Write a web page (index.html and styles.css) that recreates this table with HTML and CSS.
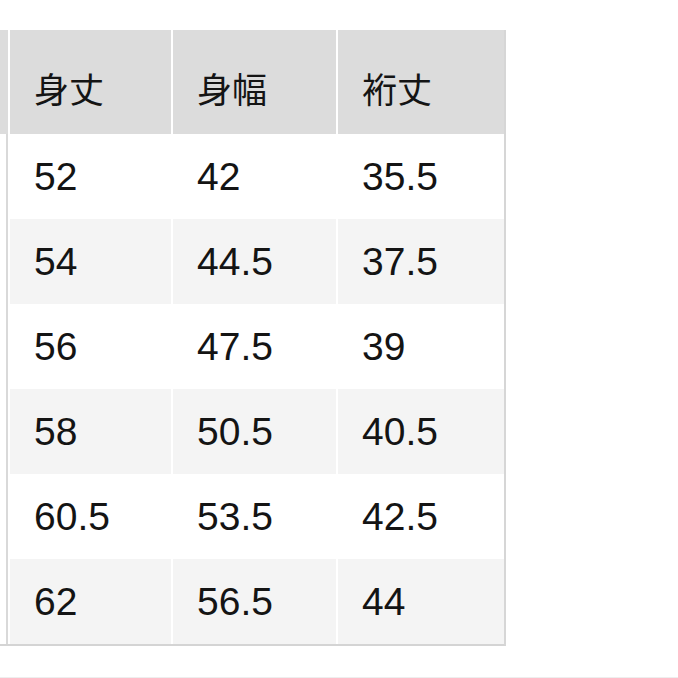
FILE: index.html
```html
<!DOCTYPE html>
<html lang="ja">
<head>
<meta charset="utf-8">
<title>サイズ表</title>
<link rel="stylesheet" href="styles.css">
</head>
<body>
<div class="sheet">
  <div class="grid">
    <div class="cut head"></div>
    <div class="cell head">身丈</div>
    <div class="cell head">身幅</div>
    <div class="cell head">裄丈</div>

    <div class="cut"></div>
    <div class="cell">52</div>
    <div class="cell">42</div>
    <div class="cell">35.5</div>

    <div class="cut"></div>
    <div class="cell alt">54</div>
    <div class="cell alt">44.5</div>
    <div class="cell alt">37.5</div>

    <div class="cut"></div>
    <div class="cell">56</div>
    <div class="cell">47.5</div>
    <div class="cell">39</div>

    <div class="cut"></div>
    <div class="cell alt">58</div>
    <div class="cell alt">50.5</div>
    <div class="cell alt">40.5</div>

    <div class="cut"></div>
    <div class="cell">60.5</div>
    <div class="cell">53.5</div>
    <div class="cell">42.5</div>

    <div class="cut"></div>
    <div class="cell alt">62</div>
    <div class="cell alt">56.5</div>
    <div class="cell alt">44</div>
  </div>
</div>
<div class="foot"></div>
</body>
</html>
```
FILE: styles.css
```css
html, body {
  margin: 0;
  padding: 0;
  background: #ffffff;
}

body {
  width: 678px;
  height: 678px;
  overflow: hidden;
  position: relative;
  font-family: "Liberation Sans", "Noto Sans CJK JP", sans-serif;
  color: #141414;
}

.sheet {
  padding-top: 30px;
}

.grid {
  display: grid;
  grid-template-columns: 8px 161px 163px 166px;
  grid-template-rows: 104px repeat(6, 85px);
  column-gap: 2px;
  width: max-content;
  border-right: 2px solid #d6d6d6;
  border-bottom: 2px solid #d4d4d4;
  background: #ffffff;
}

.cut {
  background: #ffffff;
  border-right: 2px solid #d9d9d9;
}

.cut.head {
  background: #dcdcdc;
  border-right: none;
}

.cell {
  display: flex;
  align-items: center;
  padding-left: 24px;
  font-size: 39px;
  background: #ffffff;
}

.cell.alt {
  background: #f4f4f4;
}

.cell.head {
  background: #dcdcdc;
  font-family: "Noto Sans CJK JP", "Liberation Sans", sans-serif;
  font-size: 35px;
  padding-top: 10px;
  box-sizing: border-box;
  padding-left: 24px;
}

.foot {
  position: absolute;
  left: 0;
  right: 0;
  top: 677px;
  height: 1px;
  background: #eeeeee;
}
```
